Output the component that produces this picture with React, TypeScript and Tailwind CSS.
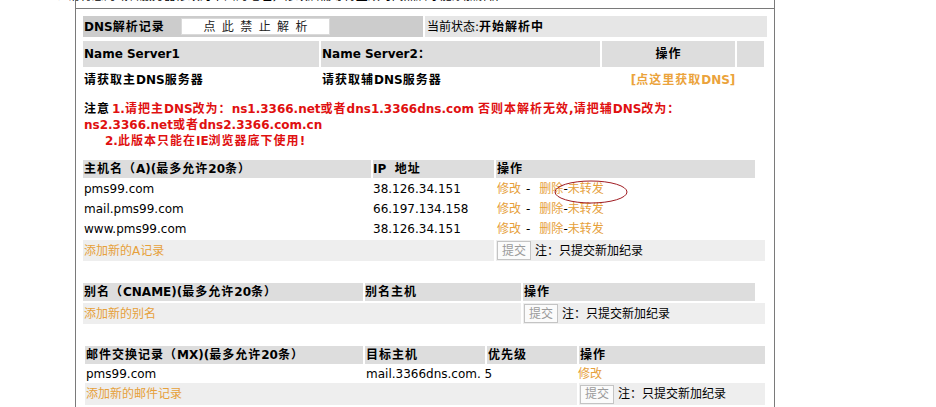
import React from "react";

const CJK = /([\u2E80-\u9FFF\uFF00-\uFFEF\u3000-\u303F]+)/;

function B({ t }: { t: string }) {
  const parts = t.split(CJK);
  return (
    <>
      {parts.map((p, i) =>
        p && CJK.test(p) ? (
          <span key={i} className="tracking-[1px]">
            {p}
          </span>
        ) : (
          <span key={i} className="whitespace-pre">{p}</span>
        )
      )}
    </>
  );
}

const O = ({ children }: { children: React.ReactNode }) => (
  <span className="text-[#e6a03a]">{children}</span>
);

function Btn() {
  return (
    <div className="flex h-[19px] w-[34px] items-center justify-center border border-[#c4c4c4] bg-[#fbfbfb] text-[#9a9a9a]">
      提交
    </div>
  );
}

function AddRow({ w1, w2, h = 21, label }: { w1: number; w2: number; h?: number; label: string }) {
  return (
    <div className="mt-[2px] flex gap-[2px]" style={{ height: h }}>
      <div className="flex items-center bg-[#eeeeee] pl-[1px]" style={{ width: w1 }}>
        <O>{label}</O>
      </div>
      <div className="flex items-center bg-[#eeeeee] pl-[1px]" style={{ width: w2 }}>
        <Btn />
        <span className="ml-[4px]">注：只提交新加纪录</span>
      </div>
    </div>
  );
}

function ARow({ host, ip }: { host: string; ip: string }) {
  return (
    <div className="mt-[2px] flex h-[18px] gap-[2px]">
      <div className="flex w-[288px] items-center pl-[1px]">{host}</div>
      <div className="flex w-[121px] items-center">{ip}</div>
      <div className="flex w-[259px] items-center pl-[1px] whitespace-nowrap">
        <O>修改</O>
        <span className="ml-[5px] mr-[9px]">-</span>
        <O>删除</O>
        <span>-</span>
        <O>未转发</O>
      </div>
    </div>
  );
}

export default function App() {
  return (
    <div className="relative h-[407px] w-[936px] overflow-hidden bg-white font-['DejaVu_Sans','Noto_Sans_CJK_SC',sans-serif] text-[12px] leading-[14px] text-black">
      <div className="ml-[75px] h-[407px] w-[700px] border-x border-[#7a7a7a]">
        {/* clipped text line above */}
        <div className="flex h-[8px] items-end">
          <div className="-ml-[36px] mb-[5px] whitespace-nowrap leading-[14px]">
            一 、请将您的域名服务器修改为下面的地址，修改后需等待生效时间然后才能添加解析
          </div>
        </div>
        <div className="border-t border-[#7a7a7a] pl-[7px] pt-[7px]">
          {/* row 1 */}
          <div className="flex h-[21px] gap-[2px]">
            <div className="flex w-[340px] items-center bg-[#cccccc] pl-[1px]">
              <span className="w-[97px] font-bold">
                <B t="DNS解析记录" />
              </span>
              <div className="flex h-[17px] w-[149px] items-center justify-center whitespace-pre border border-[#dadada] bg-white text-[#222] [word-spacing:2.6px]">
                点 此 禁 止 解 析
              </div>
            </div>
            <div className="flex w-[342px] items-center bg-[#e6e6e6] pl-[2px]">
              <span>当前状态:</span>
              <span className="font-bold">
                <B t="开始解析中" />
              </span>
            </div>
          </div>
          {/* name server header */}
          <div className="mt-[4px] flex h-[26px] gap-[2px] font-bold">
            <div className="flex w-[236px] items-center bg-[#dddddd] pl-[1px]">Name Server1</div>
            <div className="flex w-[279px] items-center bg-[#dddddd] pl-[1px]">
              <B t="Name Server2：" />
            </div>
            <div className="flex w-[133px] items-center justify-center bg-[#dddddd]">
              <B t="操作" />
            </div>
            <div className="w-[27px] bg-[#dddddd]" />
          </div>
          <div className="mt-[2px] flex h-[22px] gap-[2px] font-bold">
            <div className="flex w-[236px] items-center pl-[1px]">
              <B t="请获取主DNS服务器" />
            </div>
            <div className="flex w-[279px] items-center pl-[1px]">
              <B t="请获取辅DNS服务器" />
            </div>
            <div className="flex w-[162px] items-center justify-center text-[#eba33b]">
              <B t="[点这里获取DNS]" />
            </div>
          </div>
          {/* note */}
          <div className="mt-[10px] whitespace-nowrap pl-[1px] font-bold leading-[16px] text-[#e01010]">
            <div>
              <span className="mr-[2px] text-black">
                <B t="注意" />
              </span>
              <B t="1.请把主DNS改为：ns1.3366.net或者dns1.3366dns.com 否则本解析无效,请把辅DNS改为：" />
            </div>
            <div>
              <B t="ns2.3366.net或者dns2.3366.com.cn" />
            </div>
            <div className="pl-[21px]">
              <B t="2.此版本只能在IE浏览器底下使用!" />
            </div>
          </div>
          {/* A records */}
          <div className="mt-[11px] flex h-[18px] gap-[2px] font-bold">
            <div className="flex w-[288px] items-center bg-[#dddddd] pl-[1px]">
              <B t="主机名（A)(最多允许20条）" />
            </div>
            <div className="flex w-[121px] items-center bg-[#dddddd]">
              <B t="IP  地址" />
            </div>
            <div className="flex w-[259px] items-center bg-[#dddddd] pl-[1px]">
              <B t="操作" />
            </div>
          </div>
          <ARow host="pms99.com" ip="38.126.34.151" />
          <ARow host="mail.pms99.com" ip="66.197.134.158" />
          <ARow host="www.pms99.com" ip="38.126.34.151" />
          <AddRow w1={411} w2={269} label="添加新的A记录" />
          {/* CNAME */}
          <div className="mt-[22px] flex h-[18px] gap-[2px] font-bold">
            <div className="flex w-[280px] items-center bg-[#dddddd] pl-[1px]">
              <B t="别名（CNAME)(最多允许20条）" />
            </div>
            <div className="flex w-[156px] items-center bg-[#dddddd]">
              <B t="别名主机" />
            </div>
            <div className="flex w-[232px] items-center bg-[#dddddd] pl-[1px]">
              <B t="操作" />
            </div>
          </div>
          <AddRow w1={438} w2={242} label="添加新的别名" />
          {/* MX */}
          <div className="ml-[2px]">
            <div className="mt-[22px] flex h-[18px] gap-[2px] font-bold">
              <div className="flex w-[278px] items-center bg-[#dddddd] pl-[1px]">
                <B t="邮件交换记录（MX)(最多允许20条）" />
              </div>
              <div className="flex w-[120px] items-center bg-[#dddddd] pl-[1px]">
                <B t="目标主机" />
              </div>
              <div className="flex w-[90px] items-center bg-[#dddddd] pl-[1px]">
                <B t="优先级" />
              </div>
              <div className="flex w-[186px] items-center bg-[#dddddd] pl-[1px]">
                <B t="操作" />
              </div>
            </div>
            <div className="mt-[2px] flex h-[15px] gap-[2px]">
              <div className="flex w-[278px] items-center pl-[1px]">pms99.com</div>
              <div className="flex w-[210px] items-center whitespace-nowrap pl-[1px]">mail.3366dns.com. 5</div>
              <div className="flex w-[186px] items-center pl-[1px]">
                <O>修改</O>
              </div>
            </div>
            <AddRow w1={492} w2={186} h={22} label="添加新的邮件记录" />
          </div>
        </div>
      </div>
      <svg className="absolute left-[554px] top-[180px]" width="75" height="24" viewBox="0 0 75 24">
        <ellipse cx="37" cy="12" rx="36" ry="11" fill="none" stroke="#a01c22" strokeWidth="1" />
      </svg>
    </div>
  );
}
